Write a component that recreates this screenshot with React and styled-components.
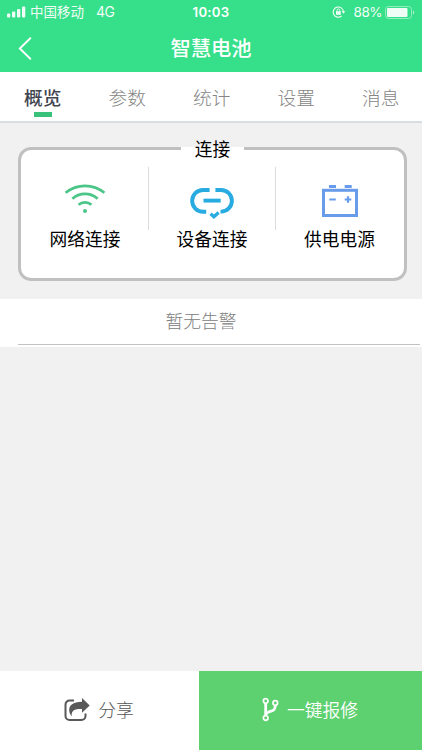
import React from "react";
import styled, { createGlobalStyle } from "styled-components";

const GlobalStyle = createGlobalStyle`
  * { box-sizing: border-box; }
  body {
    margin: 0;
    background: #f1f1f1;
    font-family: "Noto Sans CJK SC", sans-serif;
  }
`;

const Screen = styled.div`
  display: flex;
  flex-direction: column;
  width: 422px;
  height: 750px;
  overflow: hidden;
  background: #f1f1f1;
`;

const Header = styled.header`
  height: 72px;
  flex: none;
  background: #36df89;
  color: #fff;
`;

const StatusBar = styled.div`
  display: grid;
  grid-template-columns: 1fr auto 1fr;
  align-items: center;
  height: 24px;
  padding: 0 7px 0 7px;
  font-size: 13.5px;
  line-height: 24px;
`;

const StatusGroup = styled.div`
  display: flex;
  align-items: center;
  justify-content: ${(p) => (p.$end ? "flex-end" : "flex-start")};
  white-space: nowrap;
  opacity: 0.93;
`;

const Carrier = styled.span`
  margin-left: 4px;
  padding-bottom: 2px;
  line-height: 22px;
`;

const Network = styled.span`
  margin-left: 12px;
  font: 14px/24px Inter, sans-serif;
  letter-spacing: -0.6px;
`;

const Clock = styled.span`
  font: 600 13.2px/24px Inter, sans-serif;
  letter-spacing: 0.25px;
`;

const Percent = styled.span`
  margin: 0 3px 0 8px;
  font: 13.5px/24px Inter, sans-serif;
  letter-spacing: -0.5px;
`;

const NavBar = styled.div`
  display: grid;
  grid-template-columns: 50px 1fr 50px;
  align-items: center;
  height: 48px;
`;

const BackButton = styled.button`
  display: flex;
  padding: 0 0 0 18px;
  border: 0;
  background: none;
  color: inherit;
`;

const Title = styled.h1`
  margin: 0;
  padding-bottom: 2px;
  text-align: center;
  font-size: 20.3px;
  font-weight: 500;
  line-height: 46px;
`;

const Tabs = styled.nav`
  display: flex;
  flex: none;
  height: 51px;
  padding-left: 0.5px;
  background: #fff;
  border-bottom: 2px solid #d9dce0;
`;

const Tab = styled.button`
  display: flex;
  flex-direction: column;
  align-items: center;
  width: 84.5px;
  flex: none;
  padding: 11px 0 0;
  border: 0;
  background: none;
  font: ${(p) => (p.$active ? 500 : 300)} 18.7px/28px "Noto Sans CJK SC", sans-serif;
  color: ${(p) => (p.$active ? "#3f4550" : "#858585")};

  &::after {
    content: "";
    width: 18px;
    height: 5px;
    margin-top: 1px;
    background: ${(p) => (p.$active ? "#37c17b" : "transparent")};
  }
`;

const Connections = styled.fieldset`
  display: block;
  flex: none;
  min-width: 0;
  width: 389px;
  height: 145px;
  margin: 13px 0 0 18px;
  padding: 6px 0 0;
  border: 3.5px solid #c0c0c0;
  border-radius: 13px;
  background: #fff;
`;

const Legend = styled.legend`
  margin: 0 auto;
  padding: 0 14px;
  font-size: 17.7px;
  line-height: 25px;
  color: #000;
`;

const ConnectionRow = styled.div`
  display: flex;
  justify-content: center;
`;

const Connection = styled.div`
  display: flex;
  flex-direction: column;
  align-items: center;
  width: 127px;
  height: 63px;
  border-right: ${(p) => (p.$last ? "0" : "1px solid #dcdcdc")};
`;

const IconSlot = styled.div`
  display: flex;
  flex: none;
  height: 58px;
  padding-top: 14px;
`;

const Label = styled.span`
  font-size: 17.7px;
  line-height: 26px;
  color: #000;
  white-space: nowrap;
`;

const AlarmPanel = styled.section`
  flex: none;
  height: 48px;
  margin-top: 18px;
  padding: 0 2px 0 18px;
  background: #fff;
`;

const AlarmText = styled.div`
  height: 46px;
  padding-right: 36px;
  border-bottom: 1px solid #c2c2c2;
  text-align: center;
  font-size: 17.8px;
  font-weight: 300;
  line-height: 43px;
  color: #808080;
`;

const Footer = styled.footer`
  display: flex;
  height: 79px;
  flex: none;
  margin-top: auto;
`;

const Action = styled.button`
  display: flex;
  align-items: center;
  justify-content: center;
  gap: 8px;
  width: ${(p) => (p.$primary ? "223px" : "199px")};
  flex: none;
  padding: 0 1px 3px 0;
  border: 0;
  background: ${(p) => (p.$primary ? "#5dd070" : "#fff")};
  color: ${(p) => (p.$primary ? "#fff" : "#555")};
  font: ${(p) => (p.$primary ? 350 : 300)} 17.8px/26px "Noto Sans CJK SC", sans-serif;
`;

const Signal = () => (
  <svg width="19" height="12" viewBox="0 0 19 12" fill="#fff">
    <rect x="0" y="7.5" width="3.3" height="4" rx="1" />
    <rect x="5" y="5.5" width="3.3" height="6" rx="1" />
    <rect x="10" y="3" width="3.3" height="8.5" rx="1" />
    <rect x="15" y="0.5" width="3.3" height="11" rx="1" />
  </svg>
);

const RotationLock = () => (
  <svg width="14" height="12" viewBox="0 0 14 12" fill="none" stroke="#fff">
    <path d="M11.4 6.2A5.1 5.1 0 1 0 9.6 10" strokeWidth="1.1" />
    <path d="M9.6 5.2h3.8l-1.9 2.6z" fill="#fff" stroke="none" />
    <rect x="4" y="5.2" width="4.8" height="3.6" fill="#fff" stroke="none" />
    <path d="M5 5.4V4.3a1.4 1.4 0 0 1 2.8 0v1.1" strokeWidth="0.9" />
  </svg>
);

const Battery = () => (
  <svg width="30" height="13" viewBox="0 0 30 13" fill="none">
    <rect x="0.5" y="0.5" width="26" height="12" rx="3" stroke="#9af0c2" />
    <rect x="2" y="2" width="20.5" height="9" rx="1" fill="#fff" />
    <path d="M28 4.5c1.7.6 1.7 3.4 0 4z" fill="#b5f5d2" />
  </svg>
);

const Chevron = () => (
  <svg width="14" height="23" viewBox="0 0 14 23" fill="none">
    <path d="M12.3 1.2 1.8 11.5l10.5 10.3" stroke="#fff" strokeWidth="1.9" strokeLinecap="round" />
  </svg>
);

const WifiIcon = () => (
  <svg width="42" height="32" viewBox="0 -0.6 42 32" fill="none" stroke="#4cc588" strokeWidth="2.7">
    <path d="M1.6 11.2Q10 4.2 21 4.2t19.4 7" />
    <path d="M8.4 17.2Q13.5 12.2 21 12.2t12.6 5" />
    <path d="M14.6 23.2Q17.3 20.7 21 20.7t6.4 2.5" />
    <circle cx="21" cy="29.3" r="2" fill="#4cc588" stroke="none" />
  </svg>
);

const LinkIcon = () => (
  <svg width="44" height="39" viewBox="0 0 44 39" fill="none" stroke="#27abe0" strokeWidth="3.9">
    <path d="M19.6 9H13a10.85 10.85 0 0 0 0 21.7h3.2" />
    <path d="M25.4 9h5.7a10.8 10.8 0 0 1 0 21.6h-.6" />
    <path d="M13.5 19.6h17.2" />
    <path d="m20.6 32.8 3.3 2.9 4.7-4.2" strokeWidth="3.4" />
  </svg>
);

const PowerIcon = () => (
  <svg width="36" height="37" viewBox="0 -2 36 37" fill="none" stroke="#689be9">
    <rect x="1.5" y="7.3" width="33" height="25.2" strokeWidth="3" />
    <path d="M7 3.5h7M22.7 3.5h7" strokeWidth="3.2" />
    <path d="M7.3 16.5h6.5M22.7 16.5h6.6M26 13.2v6.6" strokeWidth="2.2" />
  </svg>
);

const ShareIcon = () => (
  <svg width="26" height="25" viewBox="0 0 26 25" fill="none">
    <path d="M10 3.5H5.5a4 4 0 0 0-4 4V19a4 4 0 0 0 4 4h12a4 4 0 0 0 4-4v-2.5" stroke="#595959" strokeWidth="2" />
    <path d="M18 1v3.8C9 5 4.8 8.3 5.2 13.6c.2 2.5 1.2 4.3 2.5 5.8-.4-5 1.3-7.6 10.3-7.3v3.7l7.7-7.4z" fill="#595959" />
  </svg>
);

const ForkIcon = () => (
  <svg width="17" height="25" viewBox="0 0 17 25" fill="none" stroke="#fff">
    <circle cx="3.7" cy="4" r="2.3" strokeWidth="1.7" />
    <circle cx="3.7" cy="21" r="2.3" strokeWidth="1.7" />
    <circle cx="13.3" cy="6" r="2.3" strokeWidth="1.7" />
    <path d="M3.7 6v13M13.3 8.2c0 5.5-2.6 5.2-5.5 6.3-2 .8-3.6 1.2-4.1 3.5" strokeWidth="2.8" />
  </svg>
);

const TABS = ["概览", "参数", "统计", "设置", "消息"];

const CONNECTIONS = [
  { label: "网络连接", Icon: WifiIcon },
  { label: "设备连接", Icon: LinkIcon },
  { label: "供电电源", Icon: PowerIcon },
];

export default function App() {
  return (
    <Screen>
      <GlobalStyle />
      <Header>
        <StatusBar>
          <StatusGroup>
            <Signal />
            <Carrier>中国移动</Carrier>
            <Network>4G</Network>
          </StatusGroup>
          <Clock>10:03</Clock>
          <StatusGroup $end>
            <RotationLock />
            <Percent>88%</Percent>
            <Battery />
          </StatusGroup>
        </StatusBar>
        <NavBar>
          <BackButton aria-label="返回">
            <Chevron />
          </BackButton>
          <Title>智慧电池</Title>
        </NavBar>
      </Header>
      <Tabs>
        {TABS.map((name, i) => (
          <Tab key={name} $active={i === 0}>
            {name}
          </Tab>
        ))}
      </Tabs>
      <Connections>
        <Legend>连接</Legend>
        <ConnectionRow>
          {CONNECTIONS.map(({ label, Icon }, i) => (
            <Connection key={label} $last={i === CONNECTIONS.length - 1}>
              <IconSlot>
                <Icon />
              </IconSlot>
              <Label>{label}</Label>
            </Connection>
          ))}
        </ConnectionRow>
      </Connections>
      <AlarmPanel>
        <AlarmText>暂无告警</AlarmText>
      </AlarmPanel>
      <Footer>
        <Action>
          <ShareIcon />
          分享
        </Action>
        <Action $primary>
          <ForkIcon />
          一键报修
        </Action>
      </Footer>
    </Screen>
  );
}
